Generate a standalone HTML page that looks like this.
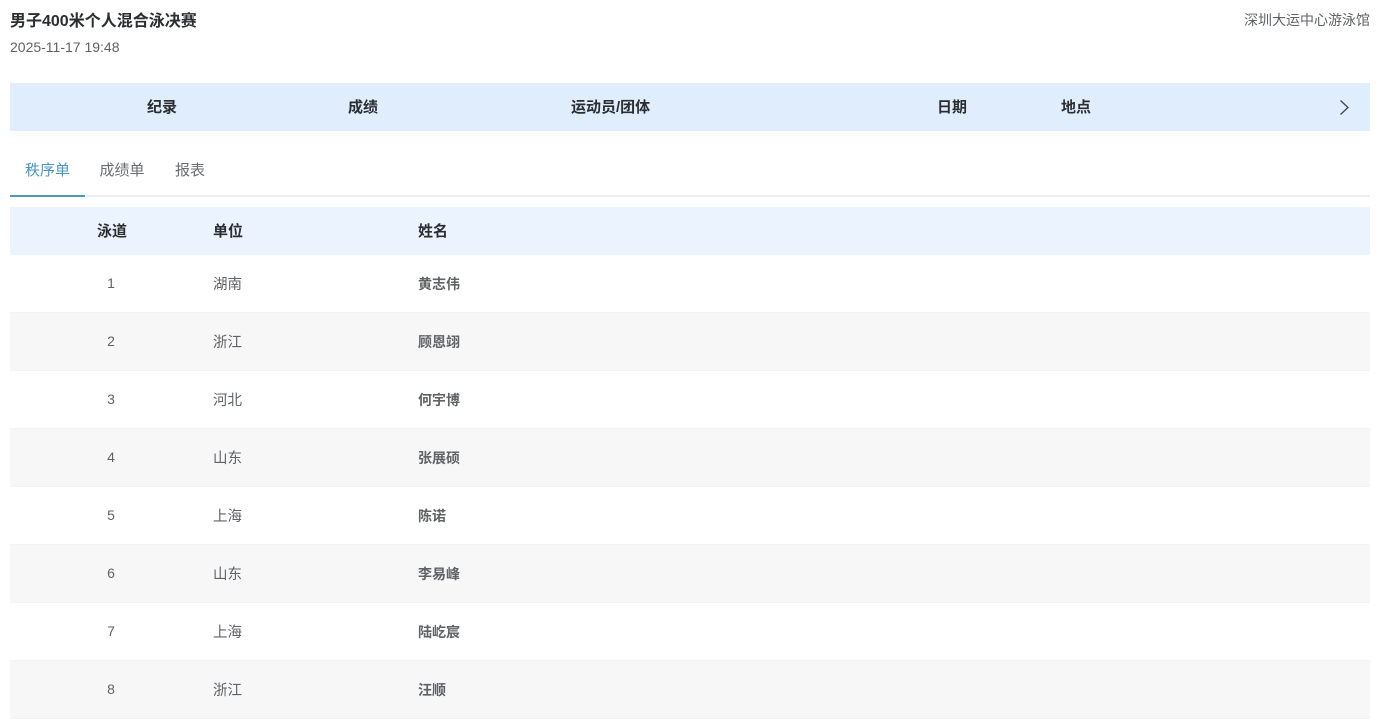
<!DOCTYPE html>
<html lang="zh">
<head>
<meta charset="utf-8">
<style>
html,body{margin:0;padding:0;width:1390px;height:720px;overflow:hidden;background:#fff;}
body{position:relative;font-family:"Liberation Sans","Microsoft YaHei","Noto Sans CJK SC",sans-serif;color:#606266;font-size:14px;}
.a{position:absolute;white-space:nowrap;}
.bar{position:absolute;left:10px;width:1360px;}
.h{font-weight:bold;color:#2b2d30;font-size:15px;line-height:20px;}
.row{position:absolute;left:10px;width:1360px;height:57px;border-bottom:1px solid #f1f3f7;}
.alt{background:#f7f7f8;}
.n{position:absolute;left:91px;width:20px;text-align:center;font-size:14px;line-height:20px;top:18px;color:#606266;}
.u{position:absolute;left:203px;font-size:14.5px;line-height:20px;top:20px;color:#606266;}
.m{position:absolute;left:408px;font-size:14px;line-height:20px;top:19px;font-weight:bold;color:#606266;}
</style>
</head>
<body>
<div class="a" style="left:10px;top:11px;font-size:16px;line-height:22px;font-weight:bold;color:#2b2d30;">男子400米个人混合泳决赛</div>
<div class="a" style="left:10px;top:38px;font-size:14px;line-height:18px;color:#606266;">2025-11-17 19:48</div>
<div class="a" style="right:20px;top:10px;font-size:14px;line-height:20px;color:#606266;">深圳大运中心游泳馆</div>

<div class="bar" style="top:83px;height:48px;background:#e0edfd;"></div>
<div class="a h" style="left:147px;top:98px;">纪录</div>
<div class="a h" style="left:348px;top:98px;">成绩</div>
<div class="a h" style="left:571px;top:98px;">运动员/团体</div>
<div class="a h" style="left:937px;top:98px;">日期</div>
<div class="a h" style="left:1061px;top:98px;">地点</div>
<svg class="a" style="left:1338px;top:99px;" width="13" height="17" viewBox="0 0 13 17"><path d="M2.5 1.5 L10 8.5 L2.5 15.5" fill="none" stroke="#3f444c" stroke-width="1.3"/></svg>

<div class="a" style="left:25px;top:161px;font-size:15px;line-height:20px;color:#4b95c4;">秩序单</div>
<div class="a" style="left:99.5px;top:161px;font-size:15px;line-height:20px;color:#6b6e73;">成绩单</div>
<div class="a" style="left:175px;top:161px;font-size:15px;line-height:20px;color:#6b6e73;">报表</div>
<div class="bar" style="top:195px;height:2px;background:#eceef1;"></div>
<div class="a" style="left:10px;top:195px;width:75px;height:2px;background:#4a9bbd;"></div>

<div class="bar" style="top:207px;height:48px;background:#eaf3fe;"></div>
<div class="a h" style="left:97px;top:222px;">泳道</div>
<div class="a h" style="left:213px;top:222px;">单位</div>
<div class="a h" style="left:418px;top:222px;">姓名</div>

<div class="row" style="top:255px;"><div class="n">1</div><div class="u">湖南</div><div class="m">黄志伟</div></div>
<div class="row alt" style="top:313px;"><div class="n">2</div><div class="u">浙江</div><div class="m">顾恩翊</div></div>
<div class="row" style="top:371px;"><div class="n">3</div><div class="u">河北</div><div class="m">何宇博</div></div>
<div class="row alt" style="top:429px;"><div class="n">4</div><div class="u">山东</div><div class="m">张展硕</div></div>
<div class="row" style="top:487px;"><div class="n">5</div><div class="u">上海</div><div class="m">陈诺</div></div>
<div class="row alt" style="top:545px;"><div class="n">6</div><div class="u">山东</div><div class="m">李易峰</div></div>
<div class="row" style="top:603px;"><div class="n">7</div><div class="u">上海</div><div class="m">陆屹宸</div></div>
<div class="row alt" style="top:661px;"><div class="n">8</div><div class="u">浙江</div><div class="m">汪顺</div></div>
</body>
</html>
